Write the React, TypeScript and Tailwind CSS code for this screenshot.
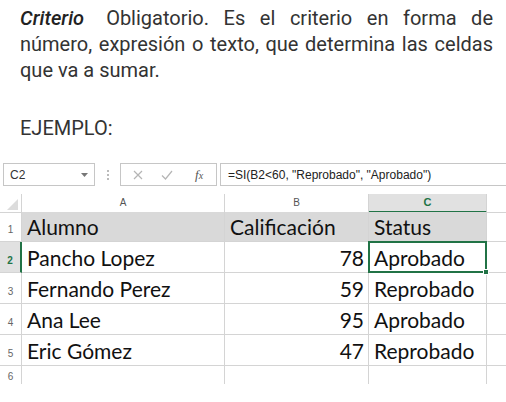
import React from "react";

const rows = [
  { n: 2, name: "Pancho Lopez", grade: "78", status: "Aprobado" },
  { n: 3, name: "Fernando Perez", grade: "59", status: "Reprobado" },
  { n: 4, name: "Ana Lee", grade: "95", status: "Aprobado" },
  { n: 5, name: "Eric Gómez", grade: "47", status: "Reprobado" },
];

const cellFont = "font-['Lato','Open_Sans',sans-serif] text-[21px] text-[#111]";
const line = "border-b border-r border-[#d4d4d4]";
const gridCols = "grid grid-cols-[22px_203px_144px_118px_1fr]";

function Toolbar() {
  return (
    <div className="flex h-[23px] items-stretch pl-[3px] font-['Liberation_Sans',sans-serif] text-[12px] text-[#333]">
      <div className="flex w-[92px] items-center justify-between border border-[#c6c6c6] pl-[6px] pr-[6px]">
        <span>C2</span>
        <svg width="7" height="4" viewBox="0 0 7 4">
          <path d="M0 0h7L3.5 4z" fill="#777" />
        </svg>
      </div>
      <div className="flex w-[25px] flex-col items-center justify-center gap-[2px]">
        <span className="h-[2px] w-[2px] bg-[#bbb]" />
        <span className="h-[2px] w-[2px] bg-[#bbb]" />
        <span className="h-[2px] w-[2px] bg-[#bbb]" />
      </div>
      <div className="flex w-[97px] items-center border border-[#c6c6c6] pl-[12px]">
        <svg width="10" height="10" viewBox="0 0 10 10">
          <path d="M1 1l8 8M9 1l-8 8" stroke="#b5b5b5" strokeWidth="1.2" />
        </svg>
        <svg className="ml-[18px]" width="12" height="10" viewBox="0 0 12 10">
          <path d="M1 5.5l3.5 3.5L11 1" stroke="#b5b5b5" strokeWidth="1.2" fill="none" />
        </svg>
        <span className="ml-[22px] font-['Liberation_Serif',serif] text-[13px] italic text-[#555]">
          f<span className="text-[10px]">x</span>
        </span>
      </div>
      <div className="ml-[3px] flex flex-1 items-center border-y border-l border-[#c6c6c6] pl-[7px] text-[#222]">
        =SI(B2&lt;60, "Reprobado", "Aprobado")
      </div>
    </div>
  );
}

export default function App() {
  return (
    <div className="h-[402px] w-[506px] overflow-hidden bg-white">
      <div className="pl-5 pr-[13px] pt-[5px] font-['Roboto',sans-serif] text-[20px] leading-[26px] text-[#333]">
        <p className="whitespace-nowrap text-justify [text-align-last:justify]">
          <i className="mr-[22px] font-medium text-[#222]">Criterio</i>Obligatorio. Es el criterio en forma de
        </p>
        <p className="whitespace-nowrap text-justify [text-align-last:justify]">
          número, expresión o texto, que determina las celdas
        </p>
        <p>que va a sumar.</p>
        <p className="mt-[32px]">EJEMPLO:</p>
      </div>

      <div className="mt-[22px]">
        <Toolbar />

        {/* encabezados de columna */}
        <div className={`mt-[8px] h-[18px] ${gridCols} font-['Liberation_Sans',sans-serif] text-[10px] text-[#555]`}>
          <div className={`${line} flex items-end justify-end pb-[2px] pr-[3px]`}>
            <svg width="11" height="11" viewBox="0 0 11 11">
              <path d="M11 0v11H0z" fill="#dcdcdc" />
            </svg>
          </div>
          <div className={`${line} flex items-center justify-center`}>A</div>
          <div className={`${line} flex items-center justify-center`}>B</div>
          <div className="flex items-center justify-center border-b-2 border-r border-b-[#217346] border-r-[#d4d4d4] bg-[#e1e1e1] text-[11px] font-bold text-[#217346]">
            C
          </div>
          <div className="border-b border-[#d4d4d4]" />
        </div>

        {/* fila 1 */}
        <div className={`h-[30px] ${gridCols}`}>
          <div className={`${line} flex items-end justify-center pb-[4px] font-['Liberation_Sans',sans-serif] text-[10px] text-[#666]`}>1</div>
          <div className={`${line} ${cellFont} flex items-end bg-[#d9d9d9] pl-[5px] leading-[28px]`}>Alumno</div>
          <div className={`${line} ${cellFont} flex items-end bg-[#d9d9d9] pl-[5px] leading-[28px]`}>Calificación</div>
          <div className={`${line} ${cellFont} flex items-end bg-[#d9d9d9] pl-[5px] leading-[28px]`}>Status</div>
          <div className="border-b border-[#d4d4d4]" />
        </div>

        {rows.map((r) => {
          const sel = r.n === 2;
          return (
            <div key={r.n} className={`h-[31px] ${gridCols}`}>
              <div
                className={
                  sel
                    ? "flex items-end justify-center border-b border-r-2 border-b-[#d4d4d4] border-r-[#217346] bg-[#e1e1e1] pb-[4px] font-['Liberation_Sans',sans-serif] text-[10px] font-bold text-[#217346]"
                    : `${line} flex items-end justify-center pb-[4px] font-['Liberation_Sans',sans-serif] text-[10px] text-[#666]`
                }
              >
                {r.n}
              </div>
              <div className={`${line} ${cellFont} flex items-end pl-[5px] leading-[29px]`}>{r.name}</div>
              <div className={`${line} ${cellFont} flex items-end justify-end pr-[4px] leading-[29px]`}>{r.grade}</div>
              {sel ? (
                <div className={`relative border-2 border-[#217346] ${cellFont} -ml-px -mt-px flex items-end pl-[4px] leading-[27px]`}>
                  {r.status}
                  <span className="absolute -bottom-[4px] -right-[4px] h-[6px] w-[6px] border border-white bg-[#217346]" />
                </div>
              ) : (
                <div className={`${line} ${cellFont} flex items-end pl-[5px] leading-[29px]`}>{r.status}</div>
              )}
              <div className="border-b border-[#d4d4d4]" />
            </div>
          );
        })}

        {/* fila 6 */}
        <div className={`h-[18px] ${gridCols}`}>
          <div className="flex items-end justify-center border-r border-[#d4d4d4] font-['Liberation_Sans',sans-serif] text-[10px] text-[#666]">6</div>
          <div className="border-r border-[#d4d4d4]" />
          <div className="border-r border-[#d4d4d4]" />
          <div className="border-r border-[#d4d4d4]" />
          <div />
        </div>
      </div>
    </div>
  );
}
